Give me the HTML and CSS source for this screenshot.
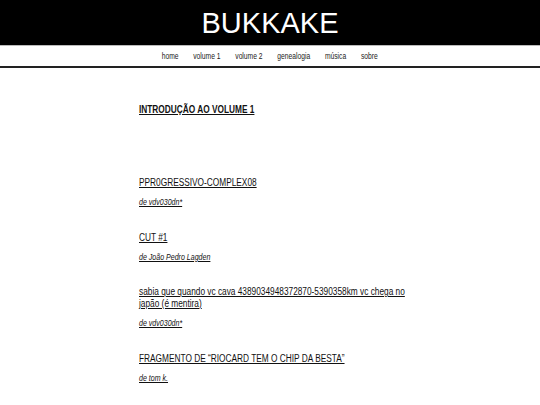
FILE: index.html
```html
<!DOCTYPE html>
<html lang="pt">
<head>
<meta charset="utf-8">
<title>BUKKAKE</title>
<link rel="stylesheet" href="styles.css">
</head>
<body>
<header class="masthead">
  <h1 class="site-title">BUKKAKE</h1>
</header>
<nav class="menu">
  <div class="menu-list">
    <a href="#">home</a>
    <a href="#">volume 1</a>
    <a href="#">volume 2</a>
    <a href="#">genealogia</a>
    <a href="#">música</a>
    <a href="#">sobre</a>
  </div>
</nav>
<main class="content">
  <div class="content-inner">
    <h2 class="intro"><a href="#">INTRODUÇÃO AO VOLUME 1</a></h2>
    <ul class="works">
      <li class="work">
        <a class="work-title" href="#">PPR0GRESSIVO-COMPLEX08</a>
        <a class="work-author" href="#">de vdv030dn*</a>
      </li>
      <li class="work">
        <a class="work-title" href="#">CUT #1</a>
        <a class="work-author" href="#">de João Pedro Lagden</a>
      </li>
      <li class="work">
        <a class="work-title" href="#">sabia que quando vc cava 4389034948372870-5390358km vc chega no japão (é mentira)</a>
        <a class="work-author" href="#">de vdv030dn*</a>
      </li>
      <li class="work">
        <a class="work-title" href="#">FRAGMENTO DE “RIOCARD TEM O CHIP DA BESTA”</a>
        <a class="work-author" href="#">de tom k.</a>
      </li>
    </ul>
  </div>
</main>
</body>
</html>
```

FILE: styles.css
```css
html, body {
  margin: 0;
  padding: 0;
  background: #fff;
}
body {
  font-family: "Liberation Sans", Arial, sans-serif;
  color: #111;
}
a {
  color: #111;
}
.masthead {
  background: #000;
  height: 45px;
  display: flex;
  align-items: center;
  justify-content: center;
}
.site-title {
  margin: 0;
  font-weight: normal;
  font-size: 29px;
  line-height: 1;
  color: #fff;
  padding-top: 1px;
}
.menu {
  border-top: 1px solid #bbb;
  border-bottom: 2px solid #222;
  height: 20px;
  display: flex;
  justify-content: center;
  align-items: center;
  overflow: hidden;
}
.menu-list {
  display: flex;
  gap: 18px;
  font-size: 8.2px;
  transform: scaleX(0.82);
  transform-origin: center;
  white-space: nowrap;
}
.menu-list a {
  text-decoration: none;
  color: #222;
}
.content {
  width: 276px;
  margin: 0 auto;
  padding-left: 14px;
}
/* narrow type: the page uses a condensed sans */
.content-inner {
  width: 332px;
  transform: scaleX(0.83);
  transform-origin: 0 0;
}
.intro {
  margin: 36px 0 0;
  font-size: 10px;
  font-weight: bold;
  line-height: 12px;
}
.works {
  list-style: none;
  margin: 61px 0 0;
  padding: 0;
  display: flex;
  flex-direction: column;
  gap: 24.5px;
}
.work {
  display: flex;
  flex-direction: column;
  align-items: flex-start;
  gap: 8px;
}
.work-title {
  font-size: 10px;
  line-height: 12px;
}
.work-author {
  font-size: 8.5px;
  font-style: italic;
  line-height: 10px;
}
```
